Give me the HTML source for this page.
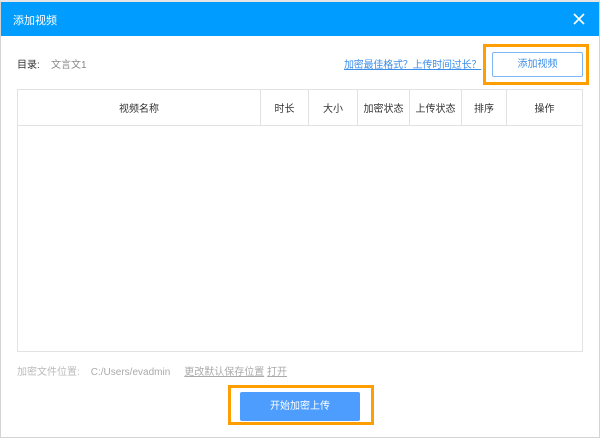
<!DOCTYPE html>
<html><head><meta charset="utf-8"><style>
*{margin:0;padding:0;box-sizing:border-box}
body{width:600px;height:438px;background:#fff;font-family:"Liberation Sans","Noto Sans CJK SC",sans-serif;font-size:10px;position:relative;overflow:hidden}
.frame{position:absolute;left:0;top:0;width:600px;height:438px;border:1px solid #d4d4d4;border-top:2px solid #e6e6e6}
.hdr{position:absolute;left:1px;top:2px;width:598px;height:34px;background:#009cff;color:#fff}
.hdr .t{position:absolute;left:12px;top:10px;font-size:11px}
.hdr svg{position:absolute;left:572px;top:11px}
.abs{position:absolute;white-space:nowrap;font-size:10px;line-height:14px;height:14px}
.ob{position:absolute;border:3px solid #ff9e00}
table{position:absolute;left:17px;top:89px;width:566px;height:263px;border-collapse:collapse;border:1px solid #e2e2e2}
th{height:36px;border:1px solid #e2e2e2;font-weight:normal;font-size:10px;color:#333}
td{border:1px solid #e2e2e2}
</style></head><body>
<div class="frame"></div>
<div class="hdr"><span class="t">添加视频</span><svg width="12" height="12" viewBox="0 0 12 12"><path d="M1 1L11 11M11 1L1 11" stroke="#fff" stroke-width="1.6"/></svg></div>
<div class="abs" style="left:17px;top:59px;color:#333">目录:</div>
<div class="abs" style="left:51px;top:59px;color:#888">文言文1</div>
<div class="abs" style="left:344px;top:59px;color:#3d8ee8;text-decoration:underline;letter-spacing:-0.2px">加密最佳格式？上传时间过长？</div>
<div class="ob" style="left:483px;top:44px;width:106px;height:41px"></div>
<div class="abs" style="left:492px;top:52px;width:91px;height:25px;border:1px solid #7eb6f5;border-radius:2px;color:#3d8ee8;text-align:center;line-height:23px">添加视频</div>
<table><tr><th style="width:243px">视频名称</th><th style="width:48px">时长</th><th style="width:49px">大小</th><th style="width:52px">加密状态</th><th style="width:52px">上传状态</th><th style="width:45px">排序</th><th>操作</th></tr><tr><td colspan="7"></td></tr></table>
<div class="abs" style="left:17px;top:366px;color:#bbb">加密文件位置:<span style="margin-left:11px;color:#aaa">C:/Users/evadmin</span><span style="margin-left:14px;color:#aaa;text-decoration:underline">更改默认保存位置</span> <span style="color:#aaa;text-decoration:underline">打开</span></div>
<div class="ob" style="left:228px;top:385px;width:146px;height:40px"></div>
<div class="abs" style="left:240px;top:392px;width:120px;height:29px;background:#4d9dff;border-radius:2px;color:#fff;text-align:center;line-height:29px">开始加密上传</div>
</body></html>
